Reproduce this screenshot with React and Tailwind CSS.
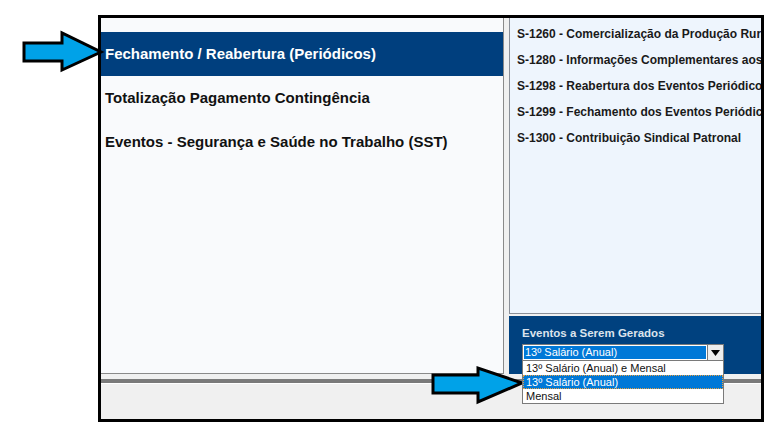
export default function App() {
  const groups = [
    "Fechamento / Reabertura (Periódicos)",
    "Totalização Pagamento Contingência",
    "Eventos - Segurança e Saúde no Trabalho (SST)",
  ];
  const events = [
    "S-1260 - Comercialização da Produção Rural Pessoa Física",
    "S-1280 - Informações Complementares aos Eventos Periódicos",
    "S-1298 - Reabertura dos Eventos Periódicos",
    "S-1299 - Fechamento dos Eventos Periódicos",
    "S-1300 - Contribuição Sindical Patronal",
  ];
  const options = ["13º Salário (Anual) e Mensal", "13º Salário (Anual)", "Mensal"];

  return (
    <div className="relative w-[771px] h-[433px] bg-white overflow-hidden" style={{ fontFamily: '"Liberation Sans", Arial, sans-serif' }}>
      <div className="ml-[98px] mt-[15px] w-[666px] h-[407px] border-[3px] border-black overflow-hidden flex flex-col bg-[#f0f0f0]">
        <div className="flex h-[356px] shrink-0">
          <div className="w-[403px] shrink-0 bg-[#f9fafc] border-r border-b border-[#8a8a8a] pt-[14px]">
            {groups.map((g, i) => (
              <div
                key={g}
                className={
                  "h-[44px] flex items-center pl-[4px] text-[15px] font-bold whitespace-nowrap " +
                  (i === 0 ? "bg-[#003f7e] text-white" : "text-[#111]")
                }
              >
                {g}
              </div>
            ))}
          </div>
          <div className="w-[5px] shrink-0 bg-[#f0f0f0]"></div>
          <div className="flex-1 flex flex-col min-w-0">
            <div className="h-[296px] shrink-0 bg-[#eef5fd] border-l border-b border-[#8a8f98] pt-[3px] pl-[7px] overflow-hidden">
              {events.map((e) => (
                <div key={e} className="h-[26px] flex items-center text-[12px] font-bold text-[#1a1a1a] whitespace-nowrap">
                  {e}
                </div>
              ))}
            </div>
            <div className="h-[2px] shrink-0 bg-[#f0f0f0]"></div>
            <div className="relative flex-1 bg-[#00417f] pl-[13px] pt-[10px]">
              <div className="text-[11.5px] font-bold text-[#dbe3ec] leading-[14px]">Eventos a Serem Gerados</div>
              <div className="absolute left-[13px] top-[28px] w-[202px] z-10 text-[11px]">
                <div className="h-[17px] flex border border-[#7a7a7a] bg-white">
                  <div className="flex-1 m-px bg-[#0078d7] text-white leading-[13px] pl-px">13º Salário (Anual)</div>
                  <div className="w-[16px] border-l border-[#7a7a7a] bg-[#ededed] flex items-center justify-center">
                    <svg width="9" height="6" viewBox="0 0 9 6">
                      <path d="M0 0h9L4.5 6z" fill="#000" />
                    </svg>
                  </div>
                </div>
                <div className="border border-t-0 border-[#7a7a7a] bg-white">
                  {options.map((o, i) => (
                    <div
                      key={o}
                      className={
                        "h-[14px] leading-[14px] pl-[3px] " +
                        (i === 1 ? "bg-[#0078d7] text-white outline outline-1 outline-dotted outline-[#e8a040] -outline-offset-1" : "text-[#111]")
                      }
                    >
                      {o}
                    </div>
                  ))}
                </div>
              </div>
            </div>
          </div>
        </div>
        <div className="h-[5px] shrink-0 bg-[#f0f0f0]"></div>
        <div className="h-[4px] shrink-0 bg-[#7a7a7a]"></div>
        <div className="h-px shrink-0 bg-white"></div>
        <div className="flex-1 bg-[#f0f0f0]"></div>
      </div>

      <svg className="absolute inset-0 pointer-events-none" width="771" height="433" viewBox="0 0 771 433">
        <polygon
          points="24,43 62,43 62,33 101,52 62,70 62,61 24,61"
          fill="#00a2e8"
          stroke="#000"
          strokeWidth="3"
          strokeLinejoin="miter"
        />
        <polygon
          points="433,375 478,375 478,368 522,383 478,402 478,393 433,393"
          fill="#00a2e8"
          stroke="#000"
          strokeWidth="3"
          strokeLinejoin="miter"
        />
      </svg>
    </div>
  );
}
